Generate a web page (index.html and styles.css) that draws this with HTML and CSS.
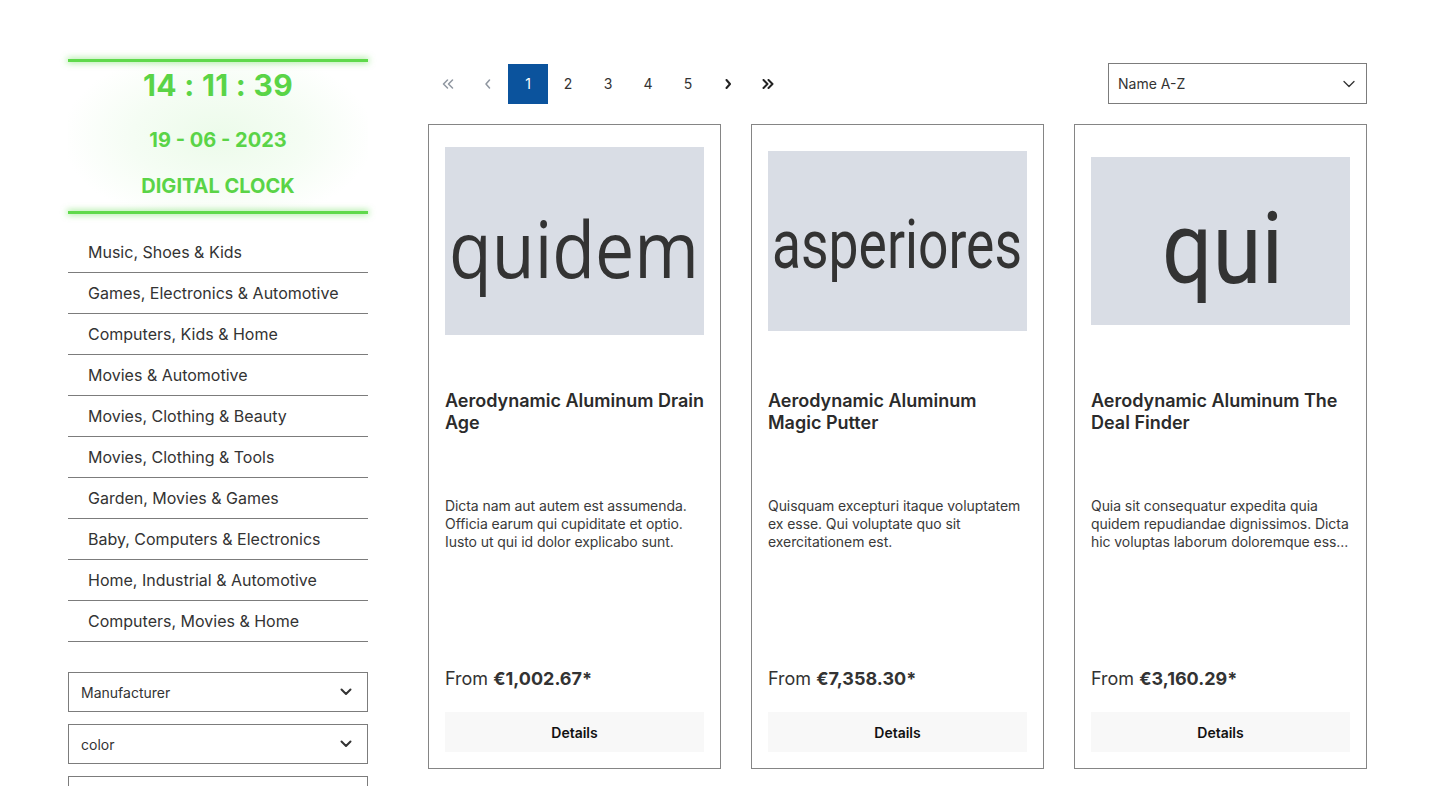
FILE: index.html
```html
<!DOCTYPE html>
<html lang="en">
<head>
<meta charset="utf-8">
<title>Listing</title>
<link rel="stylesheet" href="styles.css">
</head>
<body>
<div class="page">
  <aside class="sidebar">
    <div class="clock">
      <div class="clock-time">14 : 11 : 39</div>
      <div class="clock-date">19 - 06 - 2023</div>
      <div class="clock-label">DIGITAL CLOCK</div>
    </div>
    <ul class="cats">
      <li>Music, Shoes &amp; Kids</li>
      <li>Games, Electronics &amp; Automotive</li>
      <li>Computers, Kids &amp; Home</li>
      <li>Movies &amp; Automotive</li>
      <li>Movies, Clothing &amp; Beauty</li>
      <li>Movies, Clothing &amp; Tools</li>
      <li>Garden, Movies &amp; Games</li>
      <li>Baby, Computers &amp; Electronics</li>
      <li>Home, Industrial &amp; Automotive</li>
      <li>Computers, Movies &amp; Home</li>
    </ul>
    <div class="filters">
      <div class="filter"><span>Manufacturer</span><svg width="12" height="8" viewBox="0 0 12 8"><path d="M1.5 1.5 6 6 10.5 1.5" fill="none" stroke="#333" stroke-width="2" stroke-linecap="round" stroke-linejoin="round"/></svg></div>
      <div class="filter"><span>color</span><svg width="12" height="8" viewBox="0 0 12 8"><path d="M1.5 1.5 6 6 10.5 1.5" fill="none" stroke="#333" stroke-width="2" stroke-linecap="round" stroke-linejoin="round"/></svg></div>
      <div class="filter"><span>&nbsp;</span></div>
    </div>
  </aside>

  <main class="main">
    <div class="toolbar">
      <nav class="pager">
        <span class="pg disabled"><svg width="12" height="10" viewBox="0 0 12 10"><path d="M5.5 1 1.5 5 5.5 9M10.5 1 6.5 5 10.5 9" fill="none" stroke="currentColor" stroke-width="1.5" stroke-linecap="round" stroke-linejoin="round"/></svg></span>
        <span class="pg disabled"><svg width="6" height="10" viewBox="0 0 6 10"><path d="M4.5 1 1 5 4.5 9" fill="none" stroke="currentColor" stroke-width="1.5" stroke-linecap="round" stroke-linejoin="round"/></svg></span>
        <span class="pg active">1</span>
        <span class="pg">2</span>
        <span class="pg">3</span>
        <span class="pg">4</span>
        <span class="pg">5</span>
        <span class="pg arrow"><svg width="6" height="10" viewBox="0 0 6 10"><path d="M1.5 1 5 5 1.5 9" fill="none" stroke="currentColor" stroke-width="2" stroke-linecap="round" stroke-linejoin="round"/></svg></span>
        <span class="pg arrow"><svg width="12" height="10" viewBox="0 0 12 10"><path d="M1.5 1 5.5 5 1.5 9M6.5 1 10.5 5 6.5 9" fill="none" stroke="currentColor" stroke-width="2" stroke-linecap="round" stroke-linejoin="round"/></svg></span>
      </nav>
      <div class="sort"><span>Name A-Z</span><svg width="12" height="8" viewBox="0 0 12 8"><path d="M1 1.5 6 6.5 11 1.5" fill="none" stroke="#333" stroke-width="1.3" stroke-linecap="round" stroke-linejoin="round"/></svg></div>
    </div>

    <div class="grid">
      <article class="card">
        <div class="img-wrap">
          <svg class="ph" width="259" height="188" viewBox="0 0 259 188"><rect width="259" height="188" fill="#d9dde5"/><text x="4" y="116" transform="scale(1 1.13)" textLength="250" lengthAdjust="spacingAndGlyphs" class="ph-open">quidem</text></svg>
        </div>
        <h3 class="title">Aerodynamic Aluminum Drain Age</h3>
        <p class="desc">Dicta nam aut autem est assumenda. Officia earum qui cupiditate et optio. Iusto ut qui id dolor explicabo sunt.</p>
        <div class="price">From <b>€1,002.67*</b></div>
        <div class="btn">Details</div>
      </article>
      <article class="card">
        <div class="img-wrap">
          <svg class="ph" width="259" height="180" viewBox="0 0 259 180"><rect width="259" height="180" fill="#d9dde5"/><text x="4" y="91" transform="scale(1 1.29)" textLength="250" lengthAdjust="spacingAndGlyphs" class="ph-roboto ph-asp">asperiores</text></svg>
        </div>
        <h3 class="title">Aerodynamic Aluminum Magic Putter</h3>
        <p class="desc">Quisquam excepturi itaque voluptatem ex esse. Qui voluptate quo sit exercitationem est.</p>
        <div class="price">From <b>€7,358.30*</b></div>
        <div class="btn">Details</div>
      </article>
      <article class="card">
        <div class="img-wrap">
          <svg class="ph" width="259" height="168" viewBox="0 0 259 168"><rect width="259" height="168" fill="#d9dde5"/><text x="71" y="126" textLength="121" lengthAdjust="spacingAndGlyphs" class="ph-roboto ph-qui">qui</text></svg>
        </div>
        <h3 class="title">Aerodynamic Aluminum The Deal Finder</h3>
        <p class="desc">Quia sit consequatur expedita quia quidem repudiandae dignissimos. Dicta hic voluptas laborum doloremque ess...</p>
        <div class="price">From <b>€3,160.29*</b></div>
        <div class="btn">Details</div>
      </article>
    </div>
  </main>
</div>
</body>
</html>
```

FILE: styles.css
```css
* { box-sizing: border-box; }
html, body { margin: 0; padding: 0; background: #fff; }
body {
  font-family: Inter, "Noto Sans", "Liberation Sans", sans-serif;
  color: #333;
  overflow: hidden;
  height: 786px;
}
.page {
  display: flex;
  gap: 60px;
  padding-left: 68px;
  width: 1367px;
}
.sidebar {
  width: 300px;
  flex: none;
  padding-top: 59px;
}
.clock {
  position: relative;
  height: 155px;
  padding-top: 3px;
  background: radial-gradient(ellipse 52% 58% at 50% 50%, #ecfbea 0%, #f5fdf4 55%, #ffffff 100%);
  color: #5ad447;
  font-weight: 700;
  text-align: center;
  display: flex;
  flex-direction: column;
  align-items: center;
}
.clock::before,
.clock::after {
  content: "";
  position: absolute;
  left: 0;
  right: 0;
  height: 3px;
  background: #5fd94b;
  box-shadow: 0 0 6px 1px rgba(95, 217, 75, 0.55);
}
.clock::before { top: 0; }
.clock::after { bottom: 0; }
.clock-time {
  font-size: 30px;
  line-height: 36px;
  margin-top: 5px;
  letter-spacing: 0.3px;
}
.clock-date {
  font-size: 20px;
  line-height: 24px;
  margin-top: 25px;
}
.clock-label {
  font-size: 20px;
  line-height: 24px;
  margin-top: 22px;
}
.cats {
  list-style: none;
  margin: 18px 0 0;
  padding: 0;
}
.cats li {
  height: 41px;
  line-height: 40px;
  padding-left: 20px;
  font-size: 16px;
  border-bottom: 1px solid #7c7c7c;
  color: #333;
}
.filters {
  margin-top: 30px;
  display: flex;
  flex-direction: column;
  gap: 12px;
}
.filter {
  height: 40px;
  border: 1px solid #7c7c7c;
  display: flex;
  align-items: center;
  justify-content: space-between;
  padding: 0 15px 0 12px;
  font-size: 14px;
  color: #333;
}
.main {
  width: 939px;
  flex: none;
  padding-top: 63px;
}
.toolbar {
  display: flex;
  justify-content: space-between;
  align-items: center;
  height: 41px;
}
.pager {
  display: flex;
}
.pg {
  width: 40px;
  height: 40px;
  display: flex;
  align-items: center;
  justify-content: center;
  font-size: 14px;
  color: #333;
}
.pg.disabled { color: #8f96a0; }
.pg.arrow { color: #222; }
.pg.active {
  background: #0b539d;
  color: #fff;
}
.sort {
  width: 259px;
  height: 41px;
  border: 1px solid #7c7c7c;
  display: flex;
  align-items: center;
  justify-content: space-between;
  padding: 0 11px 0 9px;
  font-size: 14px;
  color: #333;
}
.grid {
  margin-top: 20px;
  display: grid;
  grid-template-columns: repeat(3, 293px);
  gap: 30px;
}
.card {
  height: 645px;
  border: 1px solid #858585;
  padding: 16px;
  display: flex;
  flex-direction: column;
}
.img-wrap {
  height: 200px;
  display: flex;
  align-items: center;
  justify-content: center;
  flex: none;
}
.ph { display: block; }
.ph text { fill: #333; }
.ph-open {
  font-family: "Open Sans", "Noto Sans", sans-serif;
  font-size: 69px;
}
.ph-roboto {
  font-family: Roboto, sans-serif;
}
.ph-asp { font-size: 53px; }
.ph-qui { font-size: 100px; }
.title {
  margin: 49px 0 0;
  height: 44px;
  font-size: 18px;
  line-height: 22px;
  font-weight: 600;
  color: #2b2b2b;
}
.desc {
  margin: 63px 0 0;
  height: 54px;
  font-size: 14px;
  line-height: 18px;
  letter-spacing: -0.07px;
  color: #3a3a3a;
}
.price {
  margin-top: auto;
  font-size: 18px;
  line-height: 27px;
  color: #333;
  position: relative;
  top: 1px;
}
.price b { font-weight: 700; }
.btn {
  margin-top: 21px;
  height: 40px;
  background: #f8f8f8;
  display: flex;
  align-items: center;
  justify-content: center;
  font-size: 14px;
  font-weight: 600;
  color: #111;
}
```
